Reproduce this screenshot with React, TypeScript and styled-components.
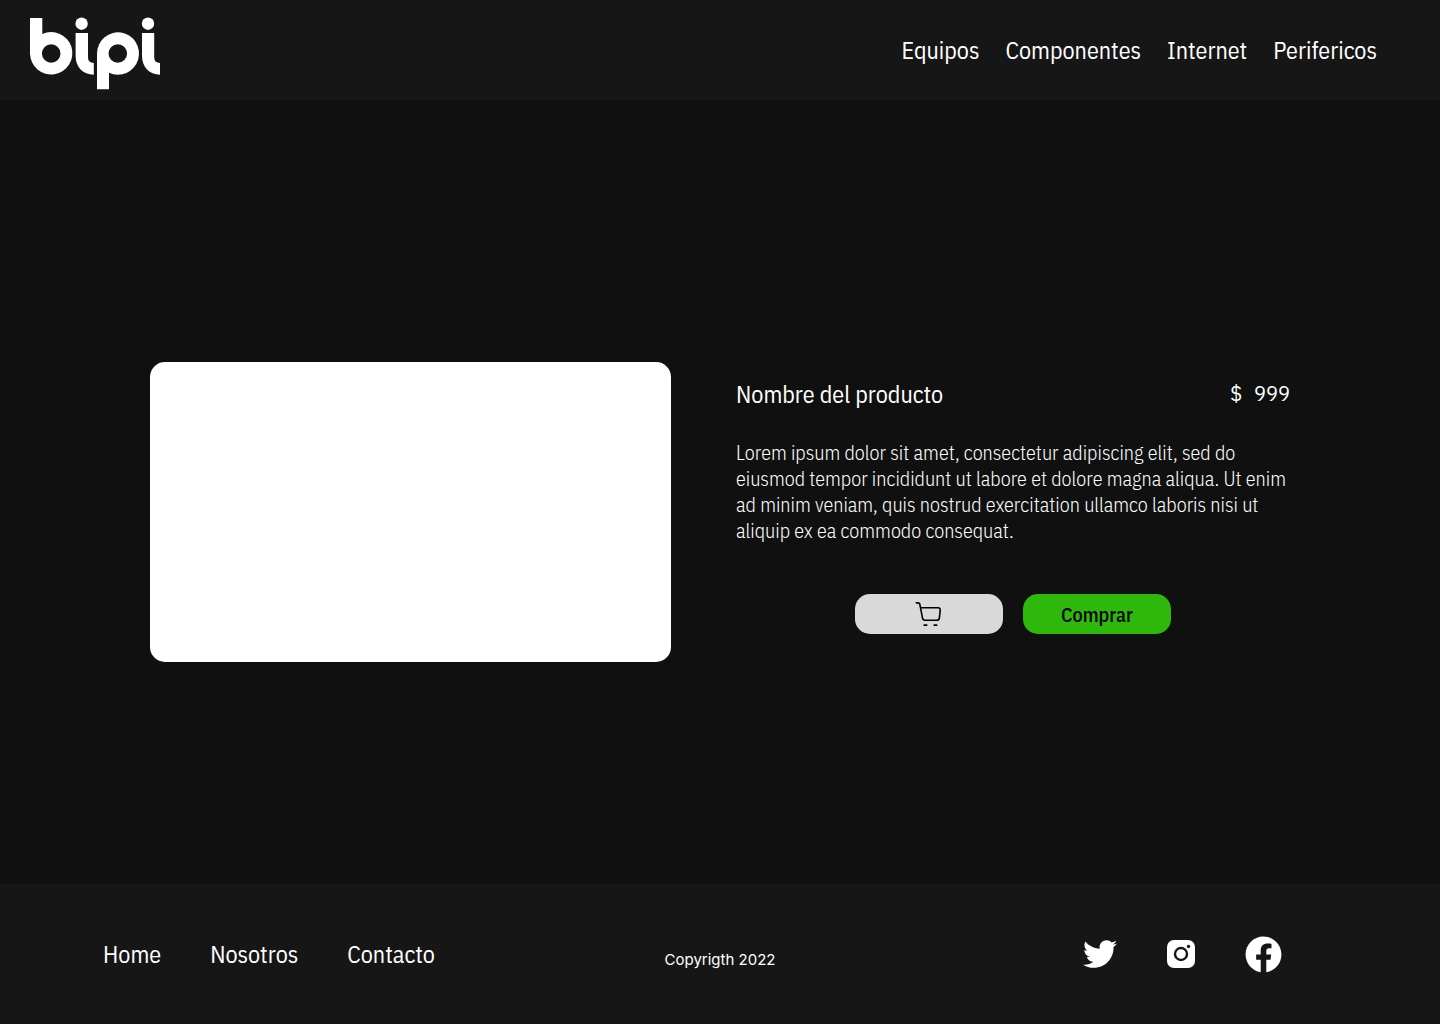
import React from "react";
import styled, { createGlobalStyle } from "styled-components";
import { FaFacebook, FaTwitter } from "react-icons/fa";

const sans = `"IBM Plex Sans Condensed", Roboto, "Liberation Sans", sans-serif`;

const GlobalStyle = createGlobalStyle`
  *, *::before, *::after { box-sizing: border-box; }
  body { margin: 0; background: #101010; color: #fff; font-family: ${sans}; }
  a { color: inherit; text-decoration: none; }
  h1, p { margin: 0; font-weight: 400; }
`;

const Page = styled.div`
  display: flex;
  flex-direction: column;
  min-height: 100vh;
`;

const Header = styled.header`
  display: flex;
  align-items: center;
  justify-content: space-between;
  height: 100px;
  padding: 0 63px 0 30px;
  background: #161616;
`;

const LogoLink = styled.a`
  display: flex;
  padding-top: 8px;
`;

const Nav = styled.nav<{ $gap: number }>`
  display: flex;
  gap: ${({ $gap }) => $gap}px;
`;

const NavLink = styled.a`
  font-size: 24px;
  line-height: 32px;
`;

const Main = styled.main`
  flex: 1;
  display: grid;
  grid-template-columns: 521fr 554fr;
  column-gap: 65px;
  align-items: center;
  padding: 40px 150px 0;
`;

const Picture = styled.div`
  height: 300px;
  border-radius: 15px;
  background: #fff;
`;

const Details = styled.section`
  display: flex;
  flex-direction: column;
  padding-bottom: 12px;
`;

const TitleRow = styled.div`
  display: flex;
  align-items: center;
  justify-content: space-between;
  margin-bottom: 30px;
`;

const Title = styled.h1`
  font-size: 24px;
  line-height: 32px;
`;

const Price = styled.p`
  font-family: "IBM Plex Mono", "Liberation Mono", monospace;
  font-size: 20px;
  line-height: 32px;
  white-space: pre;
`;

const Description = styled.p`
  font-size: 20px;
  font-weight: 300;
  line-height: 26px;
`;

const Actions = styled.div`
  display: flex;
  justify-content: center;
  gap: 20px;
  margin-top: 50px;
`;

const Button = styled.button<{ $color: string }>`
  display: flex;
  align-items: center;
  justify-content: center;
  width: 148px;
  height: 40px;
  padding: 2px 0 0;
  border: 0;
  border-radius: 15px;
  background: ${({ $color }) => $color};
  color: #000;
  font: 500 20px/26px ${sans};
  cursor: pointer;
`;

const Footer = styled.footer`
  display: grid;
  grid-template-columns: 1fr auto 1fr;
  align-items: center;
  height: 140px;
  padding: 0 103px;
  background: #161616;
`;

const Copyright = styled.p`
  padding-top: 12px;
  font-family: Inter, sans-serif;
  font-size: 15px;
  line-height: 20px;
`;

const Socials = styled.div`
  display: flex;
  align-items: center;
  justify-content: flex-end;
  gap: 50px;
  padding-right: 55px;
`;

const SocialLink = styled.a`
  display: flex;
`;

const Logo = () => (
  <svg width="130" height="72" viewBox="30 18 130 72" fill="#fff" overflow="visible" aria-hidden="true">
    <path
      fillRule="evenodd"
      d="M30 18H42.3V34A21.2 21.2 0 1 1 30 53.5ZM51.2 44.2A9.3 9.3 0 1 0 51.2 62.8A9.3 9.3 0 1 0 51.2 44.2Z"
    />
    <circle cx="81.6" cy="23.7" r="6.2" />
    <path d="M75.6 33H88V57.5Q88 62.6 93.8 63V74.7C83 74.7 75.6 67 75.6 56Z" />
    <path
      fillRule="evenodd"
      d="M97 53.5A21 21.2 0 1 1 109 72.7V89.3H97ZM117.8 44.2A9.3 9.3 0 1 0 117.8 62.8A9.3 9.3 0 1 0 117.8 44.2Z"
    />
    <circle cx="148" cy="23.7" r="6.2" />
    <path d="M142 33H154.2V57.5Q154.2 62.6 160 63V74.7C149.4 74.7 142 67 142 56Z" />
  </svg>
);

const CartIcon = () => (
  <svg
    width="28"
    height="28"
    viewBox="0.6 1 28 28"
    fill="none"
    stroke="#000"
    strokeWidth="1.6"
    strokeLinecap="round"
    strokeLinejoin="round"
    aria-hidden="true"
  >
    <path d="M1.8 2.7L4.4 3.1Q5.2 3.3 5.4 4.2L8.1 18.2Q8.5 20.3 10.6 20.3H22.3Q24.6 20.3 25 18L25.8 10.2Q26 7.8 23.8 7.8H6.2" />
    <path d="M9.9 25.2H12.2M19.9 25.2H22.2" strokeWidth="1.8" />
  </svg>
);

const InstagramIcon = () => (
  <svg width="28" height="28" viewBox="0 0 28 28" aria-hidden="true">
    <rect width="28" height="28" rx="7" fill="#fff" />
    <circle cx="14" cy="14" r="6" fill="none" stroke="#161616" strokeWidth="2.4" />
    <circle cx="21.5" cy="6.5" r="1.7" fill="#161616" />
  </svg>
);

export default function App() {
  return (
    <>
      <GlobalStyle />
      <Page>
        <Header>
          <LogoLink href="#" aria-label="bipi">
            <Logo />
          </LogoLink>
          <Nav $gap={26}>
            <NavLink href="#">Equipos</NavLink>
            <NavLink href="#">Componentes</NavLink>
            <NavLink href="#">Internet</NavLink>
            <NavLink href="#">Perifericos</NavLink>
          </Nav>
        </Header>
        <Main>
          <Picture />
          <Details>
            <TitleRow>
              <Title>Nombre del producto</Title>
              <Price>$ 999</Price>
            </TitleRow>
            <Description>
              Lorem ipsum dolor sit amet, consectetur adipiscing elit, sed do
              eiusmod tempor incididunt ut labore et dolore magna aliqua. Ut enim
              ad minim veniam, quis nostrud exercitation ullamco laboris nisi ut
              aliquip ex ea commodo consequat.
            </Description>
            <Actions>
              <Button $color="#d9d9d9" aria-label="Agregar al carrito">
                <CartIcon />
              </Button>
              <Button $color="#2eb80c">Comprar</Button>
            </Actions>
          </Details>
        </Main>
        <Footer>
          <Nav $gap={49}>
            <NavLink href="#">Home</NavLink>
            <NavLink href="#">Nosotros</NavLink>
            <NavLink href="#">Contacto</NavLink>
          </Nav>
          <Copyright>Copyrigth 2022</Copyright>
          <Socials>
            <SocialLink href="#" aria-label="Twitter">
              <FaTwitter size={34} />
            </SocialLink>
            <SocialLink href="#" aria-label="Instagram">
              <InstagramIcon />
            </SocialLink>
            <SocialLink href="#" aria-label="Facebook">
              <FaFacebook size={37} />
            </SocialLink>
          </Socials>
        </Footer>
      </Page>
    </>
  );
}
